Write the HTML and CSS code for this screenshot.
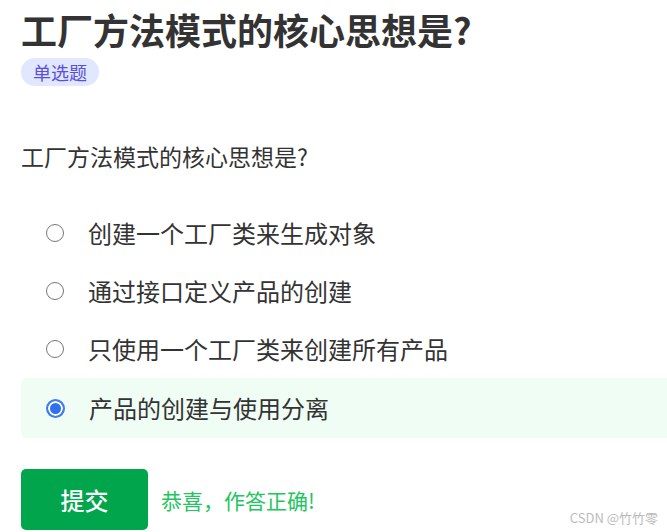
FILE: index.html
```html
<!DOCTYPE html>
<html lang="zh-CN">
<head>
<meta charset="utf-8">
<title>工厂方法模式的核心思想是?</title>
<link rel="stylesheet" href="styles.css">
</head>
<body>
<div class="page">
  <h1 class="title">工厂方法模式的核心思想是?</h1>
  <span class="badge">单选题</span>
  <p class="question">工厂方法模式的核心思想是?</p>
  <ul class="options">
    <li class="option"><span class="radio"></span><span class="label">创建一个工厂类来生成对象</span></li>
    <li class="option"><span class="radio"></span><span class="label">通过接口定义产品的创建</span></li>
    <li class="option"><span class="radio"></span><span class="label">只使用一个工厂类来创建所有产品</span></li>
    <li class="option selected"><span class="radio checked"></span><span class="label">产品的创建与使用分离</span></li>
  </ul>
  <div class="actions">
    <button class="submit">提交</button>
    <span class="result">恭喜，作答正确!</span>
  </div>
</div>
<div class="watermark">CSDN @竹竹零</div>
</body>
</html>
```
FILE: styles.css
```css
html, body {
  margin: 0;
  padding: 0;
  background: #ffffff;
  font-family: "Noto Sans CJK SC", "Noto Sans", sans-serif;
  color: #333333;
  overflow: hidden;
}

.page {
  padding: 5px 0 0 21px;
}

.title {
  margin: 0;
  font-size: 36px;
  line-height: 48px;
  font-weight: 700;
  color: #333333;
}

.badge {
  display: inline-block;
  margin-top: 5px;
  height: 28px;
  line-height: 28px;
  padding: 0 12px;
  border-radius: 14px;
  background: #e0e7ff;
  color: #5a4fd8;
  font-size: 18px;
}

.question {
  margin: 54px 0 0 0;
  font-size: 23px;
  line-height: 32px;
  color: #333333;
}

.options {
  list-style: none;
  margin: 32px -10px 0 0;
  padding: 0;
}

.option {
  display: flex;
  align-items: center;
  height: 58px;
  padding-left: 25px;
  border-radius: 6px;
}

.option.selected {
  height: 60px;
  background: #f0fdf4;
}

.radio {
  box-sizing: border-box;
  width: 18px;
  height: 18px;
  border: 1.5px solid #777777;
  border-radius: 50%;
  background: #ffffff;
  flex: none;
}

.radio.checked {
  width: 19px;
  height: 19px;
  border: 2px solid #3f7bf2;
  background: #2f6ff0;
  box-shadow: inset 0 0 0 2px #ffffff;
}

.label {
  margin-left: 24px;
  font-size: 24px;
  line-height: 32px;
  color: #333333;
}

.actions {
  display: flex;
  align-items: center;
  margin-top: 31px;
}

.submit {
  width: 127px;
  height: 61px;
  border: none;
  border-radius: 5px;
  background: #00a54c;
  color: #ffffff;
  font-family: "Noto Sans CJK SC", "Noto Sans", sans-serif;
  font-size: 24px;
  font-weight: 500;
  padding: 0;
}

.result {
  margin-left: 13px;
  font-size: 21px;
  color: #22c55e;
}

.watermark {
  position: absolute;
  right: 9px;
  bottom: 5px;
  font-size: 13px;
  color: #bbbbbb;
  font-family: "Noto Sans CJK SC", "Noto Sans", sans-serif;
}
```
